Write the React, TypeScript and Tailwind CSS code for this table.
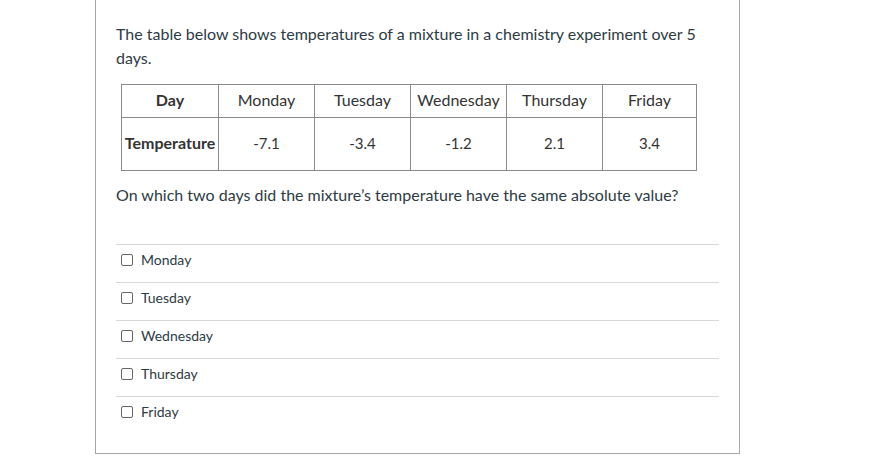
const days = ["Monday", "Tuesday", "Wednesday", "Thursday", "Friday"];
const temps = ["-7.1", "-3.4", "-1.2", "2.1", "3.4"];
const colWidths = ["w-[96px]", "w-[96px]", "w-[96px]", "w-[96px]", "w-[94px]"];

export default function App() {
  return (
    <div className="min-h-[475px] bg-white font-['Lato','Liberation_Sans',sans-serif] text-[#2d3b45]">
      <div className="ml-[95px] w-[645px] border-x border-b border-[#a5a5a5] px-5 pb-[19px] pt-[22px]">
        <p className="text-[16px] leading-6">
          The table below shows temperatures of a mixture in a chemistry experiment over 5 days.
        </p>

        <table className="ml-[5px] mt-[14px] border-collapse border border-[#3a3a3a] text-[16px] text-[#333]">
          <tbody>
            <tr className="h-[33px]">
              <th className="w-[97px] border border-[#8a8a8a] px-0 pb-[3px] font-bold">Day</th>
              {days.map((d, i) => (
                <td key={d} className={`${colWidths[i]} border border-[#8a8a8a] pb-[3px] text-center`}>
                  {d}
                </td>
              ))}
            </tr>
            <tr className="h-[53px]">
              <th className="border border-[#8a8a8a] px-0 pb-[2px] font-bold">Temperature</th>
              {temps.map((t, i) => (
                <td key={i} className="border border-[#8a8a8a] pb-[2px] text-center text-[15px]">
                  {t}
                </td>
              ))}
            </tr>
          </tbody>
        </table>

        <p className="mt-3 text-[16px] leading-6">
          On which two days did the mixture’s temperature have the same absolute value?
        </p>

        <div className="mt-[37px]">
          {days.map((d) => (
            <label
              key={d}
              className="flex h-[38px] items-center gap-2 border-t border-[#d6d9dc] pb-2 pl-[5px] text-[14px]"
            >
              <span className="h-3 w-3 rounded-[2px] border border-[#666] bg-white" />
              <span>{d}</span>
            </label>
          ))}
        </div>
      </div>
    </div>
  );
}
